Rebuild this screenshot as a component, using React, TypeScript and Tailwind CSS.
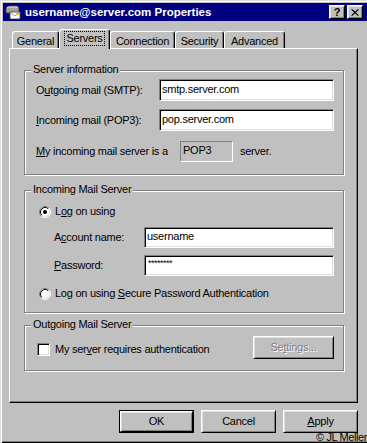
import React from "react";

const FONT = "font-['Liberation_Sans',Arial,sans-serif]";
const sunken =
  "border border-t-[#808080] border-l-[#808080] border-r-white border-b-white shadow-[inset_1px_1px_#000,inset_-1px_-1px_#dfdfdf]";
const raised =
  "border border-t-white border-l-white border-r-black border-b-black shadow-[inset_1px_1px_#dfdfdf,inset_-1px_-1px_#808080]";

function Radio({ checked }: { checked?: boolean }) {
  return (
    <svg width="12" height="12" viewBox="0 0 12 12" className="shrink-0">
      <circle cx="6" cy="6" r="5" fill="#fff" />
      <path d="M2.11 9.89 A5.5 5.5 0 0 1 9.89 2.11" fill="none" stroke="#808080" strokeWidth="1" />
      <path d="M9.89 2.11 A5.5 5.5 0 0 1 2.11 9.89" fill="none" stroke="#fff" strokeWidth="1" />
      <path d="M2.82 9.18 A4.5 4.5 0 0 1 9.18 2.82" fill="none" stroke="#000" strokeWidth="1" />
      <path d="M9.18 2.82 A4.5 4.5 0 0 1 2.82 9.18" fill="none" stroke="#dfdfdf" strokeWidth="1" />
      {checked && <circle cx="6" cy="6" r="2" fill="#000" />}
    </svg>
  );
}

function MailIcon() {
  return (
    <svg width="16" height="16" viewBox="0 0 16 16" className="shrink-0">
      <path d="M1 5 Q1 2 5 2 L11 2 Q14 2 14 5 L14 9 L1 9 Z" fill="#a0a0a0" stroke="#404040" strokeWidth="0.8" />
      <path d="M2 4 Q3 3 5 3 L11 3 Q13 3 13 4" fill="none" stroke="#e0e0e0" strokeWidth="1" />
      <rect x="5" y="8" width="10" height="7" fill="#fff" stroke="#404040" strokeWidth="0.8" />
      <path d="M5 8 L10 12 L15 8" fill="none" stroke="#808080" strokeWidth="0.8" />
      <rect x="11" y="9" width="3" height="2" fill="#e0c040" />
    </svg>
  );
}

function Group({
  label,
  className,
  children,
}: {
  label: string;
  className: string;
  children: React.ReactNode;
}) {
  return (
    <div
      className={`relative w-[320px] ml-[14px] border border-[#808080] shadow-[inset_1px_1px_#fff,1px_1px_#fff] ${className}`}
    >
      <span className="absolute left-[6px] -top-[9px] bg-[#c0c0c0] px-[2px] leading-[14px]">{label}</span>
      {children}
    </div>
  );
}

function Tab({ label, w, selected }: { label: string; w: string; selected?: boolean }) {
  if (selected) {
    return (
      <div
        className={`relative z-10 -mb-[1px] h-[20px] ${w} bg-[#c0c0c0] border-t border-l border-r border-t-white border-l-white border-r-black rounded-t-[3px] shadow-[inset_-1px_0_#808080] flex justify-center pt-[1px]`}
      >
        <span className="border border-dotted border-black px-[1px] h-[15px] leading-[13px]">{label}</span>
      </div>
    );
  }
  return (
    <div
      className={`h-[17px] ${w} border-t border-l border-r border-t-white border-l-white border-r-black rounded-t-[3px] shadow-[inset_-1px_0_#808080] flex justify-center pt-[2px] leading-[14px]`}
    >
      {label}
    </div>
  );
}

export default function App() {
  return (
    <div
      className={`relative w-[367px] h-[443px] overflow-hidden bg-[#c0c0c0] text-black text-[11px] tracking-[-0.25px] ${FONT} pl-[3px] pt-[3px] shadow-[inset_1px_1px_#dfdfdf,inset_2px_2px_#fff,inset_0_-1px_#000,inset_0_-2px_#808080]`}
    >
      {/* Title bar */}
      <div className="h-[18px] bg-[#000080] flex items-center pl-[2px] pr-[4px]">
        <MailIcon />
        <span className="ml-[4px] text-white font-bold text-[11.5px] tracking-normal leading-[18px]">
          username@server.com Properties
        </span>
        <div className="ml-auto flex items-center gap-[2px]">
          <div
            className={`w-[16px] h-[14px] bg-[#c0c0c0] text-black ${raised} flex items-center justify-center font-bold text-[11px] leading-[12px] tracking-normal`}
          >
            ?
          </div>
          <div className={`w-[16px] h-[14px] bg-[#c0c0c0] ${raised} flex items-center justify-center`}>
            <svg width="8" height="7" viewBox="0 0 8 7">
              <path
                d="M0.5 0.5 L7 6.5 M1.5 0.5 L7.5 6.5 M7 0.5 L0.5 6.5 M7.5 0.5 L1 6.5"
                stroke="#000"
                strokeWidth="1"
              />
            </svg>
          </div>
        </div>
      </div>

      {/* Tabs */}
      <div className="h-[27px] flex items-end pl-[9px]">
        <Tab label="General" w="w-[47px]" />
        <Tab label="Servers" w="w-[51px]" selected />
        <Tab label="Connection" w="w-[65px]" />
        <Tab label="Security" w="w-[49px]" />
        <Tab label="Advanced" w="w-[61px]" />
      </div>

      {/* Panel */}
      <div className="ml-[6px] w-[349px] h-[355px] border border-t-white border-l-white border-r-black border-b-black shadow-[inset_-1px_-1px_#808080] flex flex-col">
        <Group label="Server information" className="mt-[21px] h-[105px] pt-[8px] pl-[11px] flex flex-col">
          <div className="flex items-center h-[22px]">
            <span className="w-[123px]">
              O<u>u</u>tgoing mail (SMTP):
            </span>
            <div className={`w-[175px] h-[22px] bg-white ${sunken} pl-[2px] leading-[18px]`}>smtp.server.com</div>
          </div>
          <div className="flex items-center h-[22px] mt-[8px]">
            <span className="w-[123px]">
              <u>I</u>ncoming mail (POP3):
            </span>
            <div className={`w-[175px] h-[22px] bg-white ${sunken} pl-[2px] leading-[18px]`}>pop.server.com</div>
          </div>
          <div className="flex items-center h-[21px] mt-[10px]">
            <span className="w-[144px]">
              <u>M</u>y incoming mail server is a
            </span>
            <div className="w-[53px] h-[21px] border border-t-[#808080] border-l-[#808080] border-r-white border-b-white pl-[2px] leading-[17px]">
              POP3
            </div>
            <span className="ml-[7px]">server.</span>
          </div>
        </Group>

        <Group label="Incoming Mail Server" className="mt-[15px] h-[123px] pt-[14px] flex flex-col">
          <div className="flex items-center h-[13px] pl-[14px] gap-[4px]">
            <Radio checked />
            <span>
              L<u>o</u>g on using
            </span>
          </div>
          <div className="flex items-center h-[21px] mt-[9px] pl-[29px]">
            <span className="w-[90px]">
              A<u>c</u>count name:
            </span>
            <div className={`w-[190px] h-[21px] bg-white ${sunken} pl-[2px] leading-[17px]`}>username</div>
          </div>
          <div className="flex items-center h-[21px] mt-[7px] pl-[29px]">
            <span className="w-[90px]">
              <u>P</u>assword:
            </span>
            <div className={`w-[190px] h-[21px] bg-white ${sunken} pl-[3px] leading-[14px] text-[9px] tracking-[-0.5px]`}>
              ********
            </div>
          </div>
          <div className="flex items-center h-[13px] mt-[11px] pl-[14px] gap-[4px]">
            <Radio />
            <span>
              Log on using <u>S</u>ecure Password Authentication
            </span>
          </div>
        </Group>

        <Group label="Outgoing Mail Server" className="mt-[12px] h-[46px] pt-[10px] pl-[12px] pr-[9px]">
          <div className="flex items-center h-[23px]">
            <span className={`w-[13px] h-[13px] bg-white ${sunken} mt-[3px]`} />
            <span className="ml-[5px] mt-[3px]">
              My ser<u>v</u>er requires authentication
            </span>
            <div
              className={`ml-auto w-[81px] h-[23px] ${raised} flex items-center justify-center text-[#808080] [text-shadow:1px_1px_0_#fff]`}
            >
              <span>
                Se<u>t</u>tings...
              </span>
            </div>
          </div>
        </Group>
      </div>

      {/* Bottom buttons */}
      <div className="flex justify-end gap-[7px] mt-[7px] pr-[9px]">
        <div className="w-[75px] h-[23px] border border-black">
          <div className={`w-full h-full ${raised} flex items-center justify-center`}>OK</div>
        </div>
        <div className={`w-[75px] h-[23px] ${raised} flex items-center justify-center`}>Cancel</div>
        <div className={`w-[75px] h-[23px] ${raised} flex items-center justify-center`}>
          <span>
            <u>A</u>pply
          </span>
        </div>
      </div>

      <span className="absolute right-[0px] bottom-[0px] leading-[11px] text-[11px] tracking-[-0.4px]">© JL Meller</span>
    </div>
  );
}
